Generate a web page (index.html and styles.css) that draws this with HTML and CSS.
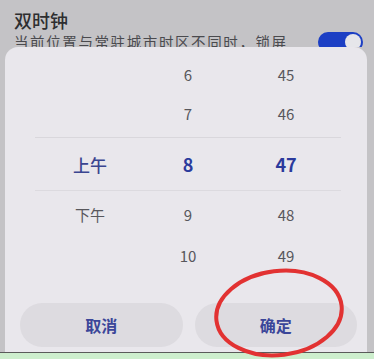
FILE: index.html
```html
<!DOCTYPE html>
<html lang="zh">
<head>
<meta charset="utf-8">
<link rel="stylesheet" href="styles.css">
</head>
<body>
<div class="screen">
  <header class="setting">
    <div class="setting-text">
      <div class="title">双时钟</div>
      <div class="desc">当前位置与常驻城市时区不同时，锁屏</div>
    </div>
    <div class="toggle"><span class="knob"></span></div>
  </header>
  <section class="dialog">
    <div class="picker">
      <div class="row r1"><span></span><span>6</span><span>45</span></div>
      <div class="row r2"><span></span><span>7</span><span>46</span></div>
      <div class="row sel"><span class="ampm">上午</span><span>8</span><span>47</span></div>
      <div class="row r4"><span>下午</span><span>9</span><span>48</span></div>
      <div class="row r5"><span></span><span>10</span><span>49</span></div>
    </div>
    <div class="buttons">
      <button class="btn">取消</button>
      <button class="btn">确定</button>
    </div>
  </section>
  <div class="bottom-strip"></div>
  <svg class="mark" width="150" height="110" viewBox="0 0 150 110">
    <ellipse cx="75" cy="55" rx="63" ry="42" fill="none" stroke="#e23232" stroke-width="4" transform="rotate(-7 75 55)"/>
  </svg>
</div>
</body>
</html>
```
FILE: styles.css
```css
* { box-sizing: border-box; }
html, body { margin: 0; padding: 0; }
body {
  width: 374px;
  height: 359px;
  overflow: hidden;
  background: #c4c3c6;
  font-family: "Noto Sans CJK SC", "Noto Sans", sans-serif;
}
.screen {
  position: relative;
  width: 374px;
  height: 359px;
  display: flex;
  flex-direction: column;
}
.setting {
  height: 47px;
  overflow: hidden;
  display: flex;
  justify-content: space-between;
  padding: 8px 11px 0 14px;
}
.title {
  font-size: 18px;
  line-height: 24px;
  color: #2e2e30;
  font-weight: 500;
}
.desc {
  font-size: 14.5px;
  line-height: 18px;
  color: #4a4a4e;
  letter-spacing: 1.6px;
  white-space: nowrap;
  margin-top: 1px;
}
.toggle {
  width: 45px;
  height: 20px;
  margin-top: 24px;
  border-radius: 10px;
  background: #1c3fc4;
  display: flex;
  justify-content: flex-end;
  align-items: center;
  padding-right: 2px;
}
.knob {
  width: 16px;
  height: 16px;
  border-radius: 50%;
  background: #e6e6ea;
}
.dialog {
  height: 305px;
  margin: 0 7px 0 5px;
  background: #e9e7ec;
  border-radius: 13px 13px 0 0;
  padding-top: 7px;
  display: flex;
  flex-direction: column;
}
.picker {
  padding-left: 35px;
}
.row {
  display: grid;
  grid-template-columns: 100px 96px 100px;
  align-items: center;
  justify-items: center;
  font-size: 15px;
  color: #58575c;
}
.r1 { height: 40px; }
.r2 { height: 43px; padding-bottom: 5px; }
.sel {
  height: 54px;
  border-top: 1px solid #d9d7dc;
  border-bottom: 1px solid #dcdadf;
  margin-left: -5px;
  width: 306px;
  padding-left: 5px;
  color: #2b3a9c;
  font-size: 18px;
  font-weight: 700;
}
.sel .ampm { font-size: 17px; font-weight: 500; color: #3a4590; }
.r4 { height: 46px; }
.r5 { height: 36px; }
.buttons {
  margin-top: 30px;
  padding: 0 10px 0 15px;
  display: flex;
  gap: 12px;
}
.btn {
  flex: 1;
  height: 44px;
  border: none;
  border-radius: 22px;
  background: #dddbe0;
  color: #3b4699;
  font-family: "Noto Sans CJK SC", sans-serif;
  font-size: 16px;
  font-weight: 700;
}
.bottom-strip {
  height: 7px;
  border-top: 1px solid #5a5a5a;
  background: #cdeecd;
}
.mark {
  position: absolute;
  left: 204px;
  top: 258px;
}
```
